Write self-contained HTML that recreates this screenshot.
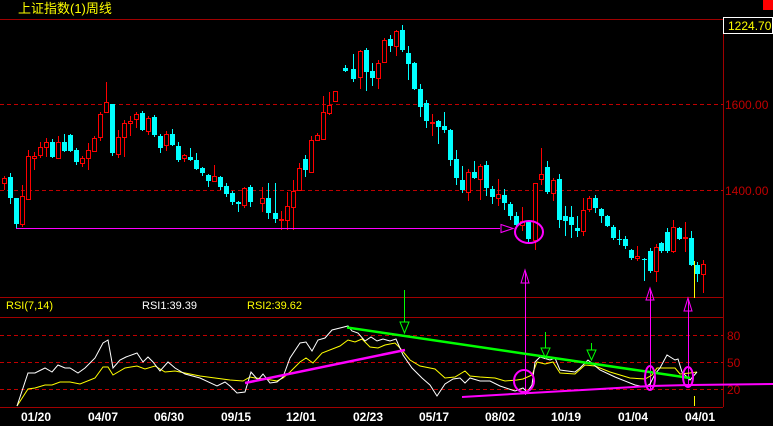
<!DOCTYPE html>
<html><head><meta charset="utf-8"><style>
html,body{margin:0;padding:0;background:#000;width:773px;height:426px;overflow:hidden}
svg{display:block}
text{font-family:"Liberation Sans","Noto Sans CJK SC",sans-serif}
</style></head><body>
<svg width="773" height="426" viewBox="0 0 773 426" xmlns="http://www.w3.org/2000/svg">
<rect width="773" height="426" fill="#000"/>
<text x="18" y="13" font-size="13" fill="#ffff00">上证指数(1)周线</text>
<rect x="763" y="0" width="10" height="10" fill="#ff0000"/>
<!-- grid -->
<g stroke="#a00000" stroke-width="1" fill="none">
<path d="M0 19.5H773M0 297.5H723M0 317.5H723M0 407.5H723M723.5 19V407"/>
</g>
<g stroke="#c00000" stroke-width="1" stroke-dasharray="4,3" fill="none">
<path d="M0 104.5H723M0 190.5H723M0 335.5H723M0 362.5H723M0 389.5H723"/>
</g>
<rect x="723.5" y="17.5" width="49" height="16" fill="#000" stroke="#fff"/>
<text x="728" y="30" font-size="12" fill="#ffff00">1224.70</text>
<g font-size="12" fill="#c00000">
<text x="725" y="109">1600.00</text>
<text x="725" y="195">1400.00</text>
<text x="727" y="340">80</text>
<text x="727" y="367">50</text>
<text x="727" y="394">20</text>
</g>
<!-- wicks red -->
<g stroke="#ff0000" stroke-width="1">
<path d="M4.5 176V190M22.5 185V227M28.5 150V200M34.5 152V170M40.5 142V158M46.5 138V157M58.5 136V159M82.5 156V167M88.5 143V170M94.5 136V152M100.5 112V141M106.5 82V112M118.5 130V158M124.5 120V157M130.5 116V136M136.5 112V128M148.5 116V135M166.5 131V151M184.5 154V162M214.5 165V182M244.5 187V208M262.5 187V212M281.5 211V230M287.5 192V230M293.5 180V230M299.5 163V190M311.5 136V173M317.5 133V141M323.5 96V139M329.5 92V115M335.5 91V101M360.5 50V89M378.5 60V89M384.5 38V63M396.5 30V56M432.5 114V136M468.5 169V201M480.5 164V200M498.5 179V206M522.5 207V231M535.5 183V250M541.5 148V185M553.5 178V201M583.5 198V236M589.5 196V212M637.5 246V261M656.5 244V282M673.5 220V253M685.5 222V252M703.5 260V293"/>
</g>
<g stroke="#00ffff" stroke-width="1">
<path d="M10.5 173V204M16.5 198V228M52.5 139V158M64.5 134V152M70.5 134V152M76.5 148V165M112.5 104V156M142.5 111V131M154.5 115V137M160.5 134V153M172.5 129V146M178.5 142V162M190.5 148V161M196.5 153V170M202.5 167V176M208.5 174V187M220.5 176V190M226.5 183V197M232.5 191V205M238.5 201V212M250.5 185V207M268.5 183V219M275.5 183V223M305.5 155V177M345.5 65V72M353.5 54V82M366.5 48V91M372.5 63V86M390.5 35V52M402.5 25V52M408.5 46V80M414.5 62V90M420.5 84V117M426.5 100V128M438.5 120V144M444.5 112V133M450.5 129V166M456.5 150V185M462.5 166V193M474.5 161V179M486.5 161V196M492.5 186V204M504.5 189V210M510.5 202V220M516.5 212V227M528.5 221V242M547.5 161V194M559.5 174V228M565.5 206V236M571.5 206V238M577.5 216V237M595.5 195V213M601.5 208V223M607.5 215V227M613.5 225V240M619.5 230V245M625.5 236V249M631.5 249V260M644.5 258V281M650.5 248V273M661.5 242V253M667.5 228V253M679.5 227V240M691.5 231V266M697.5 262V282"/>
</g>
<!-- red bodies hollow -->
<g fill="#000" stroke="#ff0000" stroke-width="1">
<rect x="2.5" y="178.5" width="4" height="5"/><rect x="20.5" y="196.5" width="4" height="28"/><rect x="26.5" y="156.5" width="4" height="43"/><rect x="32.5" y="156.5" width="4" height="2"/><rect x="38.5" y="147.5" width="4" height="8"/><rect x="44.5" y="142.5" width="4" height="5"/><rect x="56.5" y="142.5" width="4" height="16"/><rect x="80.5" y="158.5" width="4" height="5"/><rect x="86.5" y="150.5" width="4" height="8"/><rect x="92.5" y="138.5" width="4" height="13"/><rect x="98.5" y="114.5" width="4" height="23"/><rect x="104.5" y="102.5" width="4" height="10"/><rect x="116.5" y="137.5" width="4" height="17"/><rect x="122.5" y="123.5" width="4" height="14"/><rect x="128.5" y="121.5" width="4" height="2"/><rect x="134.5" y="114.5" width="4" height="5"/><rect x="146.5" y="118.5" width="4" height="13"/><rect x="164.5" y="134.5" width="4" height="11"/><rect x="182.5" y="155.5" width="4" height="3"/><rect x="212.5" y="176.5" width="4" height="5"/><rect x="242.5" y="188.5" width="4" height="17"/><rect x="260.5" y="198.5" width="4" height="5"/><rect x="279.5" y="219.5" width="4" height="1"/><rect x="285.5" y="206.5" width="4" height="14"/><rect x="291.5" y="191.5" width="4" height="16"/><rect x="297.5" y="168.5" width="4" height="22"/><rect x="309.5" y="140.5" width="4" height="32"/><rect x="315.5" y="135.5" width="4" height="5"/><rect x="321.5" y="112.5" width="4" height="27"/><rect x="327.5" y="105.5" width="4" height="8"/><rect x="333.5" y="91.5" width="4" height="10"/><rect x="358.5" y="51.5" width="4" height="26"/><rect x="376.5" y="63.5" width="4" height="15"/><rect x="382.5" y="40.5" width="4" height="22"/><rect x="394.5" y="31.5" width="4" height="15"/><rect x="430.5" y="122.5" width="4" height="1"/><rect x="466.5" y="172.5" width="4" height="20"/><rect x="478.5" y="166.5" width="4" height="13"/><rect x="496.5" y="194.5" width="4" height="4"/><rect x="520.5" y="221.5" width="4" height="4"/><rect x="533.5" y="183.5" width="4" height="57"/><rect x="539.5" y="174.5" width="4" height="5"/><rect x="551.5" y="180.5" width="4" height="13"/><rect x="581.5" y="210.5" width="4" height="21"/><rect x="587.5" y="198.5" width="4" height="11"/><rect x="635.5" y="256.5" width="4" height="2"/><rect x="654.5" y="247.5" width="4" height="24"/><rect x="671.5" y="227.5" width="4" height="24"/><rect x="683.5" y="237.5" width="4" height="1"/><rect x="701.5" y="264.5" width="4" height="10"/>
</g>
<!-- cyan bodies -->
<g fill="#00ffff">
<rect x="8" y="177" width="5" height="21"/><rect x="14" y="198" width="5" height="26"/><rect x="50" y="142" width="5" height="15"/><rect x="62" y="142" width="5" height="9"/><rect x="68" y="135" width="5" height="16"/><rect x="74" y="150" width="5" height="12"/><rect x="110" y="104" width="5" height="49"/><rect x="140" y="113" width="5" height="17"/><rect x="152" y="117" width="5" height="18"/><rect x="158" y="136" width="5" height="12"/><rect x="170" y="134" width="5" height="11"/><rect x="176" y="146" width="5" height="14"/><rect x="188" y="157" width="5" height="3"/><rect x="194" y="160" width="5" height="9"/><rect x="200" y="168" width="5" height="5"/><rect x="206" y="175" width="5" height="6"/><rect x="218" y="177" width="5" height="10"/><rect x="224" y="186" width="5" height="8"/><rect x="230" y="193" width="5" height="9"/><rect x="236" y="202" width="5" height="2"/><rect x="248" y="187" width="5" height="15"/><rect x="266" y="198" width="5" height="15"/><rect x="273" y="213" width="5" height="6"/><rect x="303" y="159" width="5" height="11"/><rect x="343" y="68" width="5" height="3"/><rect x="351" y="69" width="5" height="10"/><rect x="364" y="50" width="5" height="22"/><rect x="370" y="71" width="5" height="7"/><rect x="388" y="39" width="5" height="7"/><rect x="400" y="30" width="5" height="20"/><rect x="406" y="53" width="5" height="11"/><rect x="412" y="63" width="5" height="26"/><rect x="418" y="89" width="5" height="18"/><rect x="424" y="103" width="5" height="18"/><rect x="436" y="121" width="5" height="6"/><rect x="442" y="126" width="5" height="4"/><rect x="448" y="130" width="5" height="30"/><rect x="454" y="159" width="5" height="19"/><rect x="460" y="180" width="5" height="10"/><rect x="472" y="172" width="5" height="6"/><rect x="484" y="165" width="5" height="23"/><rect x="490" y="189" width="5" height="8"/><rect x="502" y="195" width="5" height="8"/><rect x="508" y="204" width="5" height="12"/><rect x="514" y="216" width="5" height="9"/><rect x="526" y="222" width="5" height="17"/><rect x="545" y="167" width="5" height="25"/><rect x="557" y="179" width="5" height="41"/><rect x="563" y="216" width="5" height="5"/><rect x="569" y="217" width="5" height="8"/><rect x="575" y="228" width="5" height="3"/><rect x="593" y="198" width="5" height="10"/><rect x="599" y="209" width="5" height="7"/><rect x="605" y="216" width="5" height="10"/><rect x="611" y="227" width="5" height="11"/><rect x="617" y="239" width="5" height="1"/><rect x="623" y="239" width="5" height="7"/><rect x="629" y="250" width="5" height="8"/><rect x="642" y="259" width="5" height="1"/><rect x="648" y="251" width="5" height="20"/><rect x="659" y="243" width="5" height="8"/><rect x="665" y="232" width="5" height="19"/><rect x="677" y="228" width="5" height="11"/><rect x="689" y="238" width="5" height="27"/><rect x="695" y="265" width="5" height="9"/>
</g>
<path d="M694.5 261V298M694.5 396V406" stroke="#ffff00"/>
<!-- magenta main annotations -->
<g stroke="#ff00ff" fill="none" stroke-width="1">
<path d="M16 228.5H500"/>
<path d="M501 224.5L513 228.5L501 232.5Z"/>
<ellipse cx="529" cy="232" rx="14" ry="11" stroke-width="2"/>
<path d="M525.5 395V272M521 283L525 270L529 283Z"/>
<path d="M650.5 390V290M646 300L650 288L654 300Z"/>
<path d="M688.5 387V300M684 311L688 298L692 311Z"/>
</g>
<!-- RSI panel -->
<text x="6" y="309" font-size="11" fill="#ffff00">RSI(7,14)</text>
<text x="142" y="309" font-size="11" fill="#fff">RSI1:39.39</text>
<text x="247" y="309" font-size="11" fill="#ffff00">RSI2:39.62</text>
<polyline fill="none" stroke="#ffff00" stroke-width="1" points="17,406 28,389 35,388 45,385 52,385 60,382 70,382 80,384 90,380 95,378 103,367 108,367 113,375 125,368 137,366 145,369 155,366 165,372 175,371 185,373 200,376 215,378 230,380 243,381 250,377 255,378 265,379 277,381 283,378 290,372 300,362 306,358 313,363 322,353 340,346 348,340 355,342 362,339 370,347 378,348 385,345 395,343 400,348 410,360 420,366 435,369 445,378 455,377 465,371 470,376 480,377 495,378 505,381 517,380 523,379 532,375 537,362 545,364 553,362 560,373 575,374 585,365 595,366 610,372 630,378 645,379 652,375 657,368 665,368 675,368 680,374 690,373 697,372"/>
<polyline fill="none" stroke="#ffffff" stroke-width="1" points="17,406 28,373 35,373 45,368 52,372 58,365 65,368 70,368 78,373 85,368 95,358 103,343 108,340 113,368 120,360 126,357 137,353 143,362 148,357 153,362 160,371 168,362 175,368 185,374 200,378 217,386 225,382 230,386 237,393 245,392 251,372 258,380 263,374 270,383 277,382 283,377 290,358 300,343 306,342 312,351 318,340 325,338 332,330 340,328 348,326 352,331 358,333 365,341 371,337 377,341 383,339 390,341 396,339 403,355 412,368 422,378 430,385 437,396 445,384 453,379 460,378 465,383 470,378 480,381 490,381 500,386 515,391 523,388 527,392 532,385 535,362 540,357 550,360 555,358 560,370 575,372 580,368 588,360 600,370 615,377 635,385 645,387 650,384 655,374 660,368 667,355 675,360 678,359 682,372 690,380 697,372"/>
<path d="M347 327.5L690 378" stroke="#00ff00" stroke-width="2.5" fill="none"/>
<path d="M245 383L405 350" stroke="#ff00ff" stroke-width="2.5" fill="none"/>
<path d="M462 397L530 393L600 389L650 386L690 385L773 384" stroke="#ff00ff" stroke-width="2" fill="none"/>
<g stroke="#00ff00" fill="none" stroke-width="1">
<path d="M404.5 290V322M400 322H409L404.5 333Z"/>
<path d="M545.5 332V348M541 348H550L545.5 358Z"/>
<path d="M591.5 343V350M587 350H596L591.5 360Z"/>
</g>
<g stroke="#ff00ff" fill="none" stroke-width="2">
<ellipse cx="524" cy="381" rx="10" ry="11"/>
<ellipse cx="650" cy="378" rx="5" ry="12"/>
<ellipse cx="688" cy="377" rx="5" ry="10"/>
</g>
<g font-size="12" font-weight="bold" fill="#fff" font-family="Liberation Mono,monospace" text-anchor="middle">
<text x="36" y="421">01/20</text><text x="103" y="421">04/07</text><text x="169" y="421">06/30</text><text x="236" y="421">09/15</text><text x="301" y="421">12/01</text><text x="368" y="421">02/23</text><text x="434" y="421">05/17</text><text x="500" y="421">08/02</text><text x="566" y="421">10/19</text><text x="633" y="421">01/04</text><text x="700" y="421">04/01</text>
</g>
</svg>
</body></html>
